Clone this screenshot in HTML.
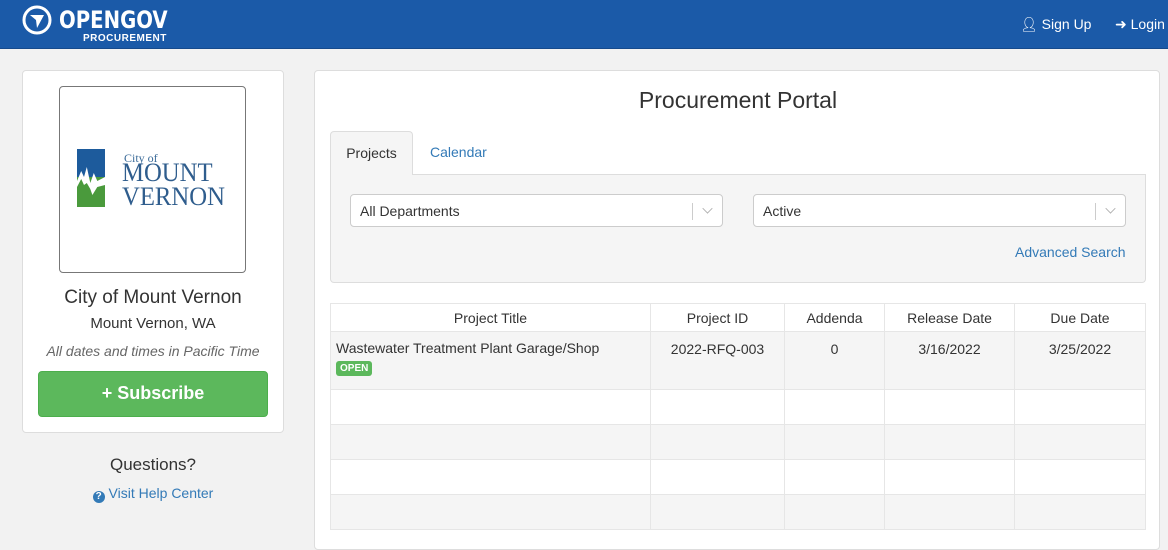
<!DOCTYPE html>
<html><head><meta charset="utf-8"><style>
*{box-sizing:border-box;margin:0;padding:0}
body{width:1168px;height:535px;overflow:hidden;background:#f2f2f2;font-family:"Liberation Sans",Arial,sans-serif;font-size:14px;color:#333;position:relative}
.hdr{position:absolute;left:0;top:0;width:1168px;height:49px;background:#1b5aa8;border-bottom:1px solid #164a8c}
.abs{position:absolute}
.panel{position:absolute;background:#fff;border:1px solid #ddd;border-radius:4px}
.sel{position:absolute;height:33px;background:#fff;border:1px solid #ccc;border-radius:4px;padding:8px 9px;font-size:14px}
.sel .bar{position:absolute;right:29px;top:8px;width:1px;height:17px;background:#ccc}
.sel .ch{position:absolute;right:10px;top:9px;width:9px;height:9px;border-right:1.5px solid #aaa;border-bottom:1.5px solid #aaa;transform:rotate(45deg) scale(.8)}
table{border-collapse:collapse;position:absolute;left:330px;top:303px;width:816px;font-size:14px}
td,th{border:1px solid #e6e6e6;text-align:center;font-weight:normal}
th{height:28px;background:#fff}
</style></head><body>
<div class="hdr">
<svg class="abs" style="left:22px;top:5px" width="30" height="30" viewBox="0 0 30 30"><circle cx="15" cy="15" r="13" fill="none" stroke="#fff" stroke-width="3"/><path d="M8 10 L22 10 L15 23 L14 15 Z" fill="#fff"/></svg>
<div class="abs" style="left:59px;top:6px;color:#fff;font-weight:bold;font-size:24px;letter-spacing:0px;transform:scaleX(.82);transform-origin:left;font-family:'DejaVu Sans','Liberation Sans',sans-serif">OPENGOV</div>
<div class="abs" style="left:83px;top:33px;color:#fff;font-weight:bold;font-size:10px;letter-spacing:.5px">PROCUREMENT</div>
<div class="abs" style="left:1020px;top:16px;color:#fff;font-size:14px">&#128100;︎ Sign Up</div>
<div class="abs" style="left:1115px;top:16px;color:#fff;font-size:14px">&#10140; Login</div>
</div>

<div class="panel" style="left:22px;top:70px;width:262px;height:363px">
<div class="abs" style="left:36px;top:15px;width:187px;height:187px;border:1px solid #777;border-radius:4px;background:#fff">
<svg class="abs" style="left:17px;top:62px" width="28" height="58" viewBox="0 0 40 58" preserveAspectRatio="none"><rect width="40" height="30" fill="#1d5b9c"/><rect y="28" width="40" height="30" fill="#4a9a3c"/><path d="M0 32 L6 22 L10 28 L14 18 L19 34 L24 24 L29 32 L40 28 L40 36 L29 38 L22 46 L19 40 L14 34 L10 36 L6 30 L0 38Z" fill="#fff"/></svg>
<div class="abs" style="left:64px;top:64px;color:#3a6a98;font-family:'Liberation Serif',serif;font-size:12px">City of</div>
<div class="abs" style="left:62px;top:74px;color:#2f5d8d;font-family:'Liberation Serif',serif;font-size:26px;line-height:24px;transform:scaleX(.95);transform-origin:left">MOUNT<br>VERNON</div>
</div>
<div class="abs" style="left:0;width:260px;top:216px;text-align:center;font-size:19px">City of Mount Vernon</div>
<div class="abs" style="left:0;width:260px;top:244px;text-align:center;font-size:15px">Mount Vernon, WA</div>
<div class="abs" style="left:0;width:260px;top:272px;text-align:center;font-size:14px;font-style:italic;color:#666">All dates and times in Pacific Time</div>
<div class="abs" style="left:15px;top:300px;width:230px;height:46px;background:#5cb85c;border:1px solid #4cae4c;border-radius:4px;color:#fff;font-size:18px;text-align:center;line-height:43px;font-weight:bold">+ Subscribe</div>
</div>
<div class="abs" style="left:22px;width:262px;top:455px;text-align:center;font-size:17px">Questions?</div>
<div class="abs" style="left:22px;width:262px;top:485px;text-align:center;font-size:14px;color:#337ab7"><span style="display:inline-block;width:12px;height:12px;border-radius:50%;background:#337ab7;color:#fff;font-size:10px;line-height:12px;font-weight:bold;vertical-align:-1px">?</span> Visit Help Center</div>

<div class="panel" style="left:314px;top:70px;width:846px;height:480px">
<div class="abs" style="left:0;width:846px;top:16px;text-align:center;font-size:23px">Procurement Portal</div>
</div>
<div class="abs" style="left:330px;top:174px;width:816px;height:1px;background:#ddd"></div>
<div class="abs" style="left:330px;top:131px;width:83px;height:45px;background:#f5f5f5;border:1px solid #ddd;border-bottom:none;border-radius:4px 4px 0 0;text-align:center;line-height:42px">Projects</div>
<div class="abs" style="left:430px;top:144px;color:#337ab7">Calendar</div>
<div class="abs" style="left:330px;top:175px;width:816px;height:108px;background:#f5f5f5;border:1px solid #ddd;border-top:none;border-radius:0 0 4px 4px"></div>
<div class="sel" style="left:350px;top:194px;width:373px">All Departments<div class="bar"></div><div class="ch"></div></div>
<div class="sel" style="left:753px;top:194px;width:373px">Active<div class="bar"></div><div class="ch"></div></div>
<div class="abs" style="left:1015px;top:244px;color:#337ab7">Advanced Search</div>
<table>
<tr><th style="width:320px">Project Title</th><th style="width:134px">Project ID</th><th style="width:100px">Addenda</th><th style="width:130px">Release Date</th><th>Due Date</th></tr>
<tr style="background:#f5f5f5;height:58px;vertical-align:top"><td style="text-align:left;padding:8px 5px">Wastewater Treatment Plant Garage/Shop<br><span style="display:inline-block;margin-top:5px;background:#5cb85c;color:#fff;font-size:10px;font-weight:bold;padding:2px 4px;border-radius:3px">OPEN</span></td><td style="padding-top:9px">2022-RFQ-003</td><td style="padding-top:9px">0</td><td style="padding-top:9px">3/16/2022</td><td style="padding-top:9px">3/25/2022</td></tr>
<tr style="height:35px;background:#fff"><td></td><td></td><td></td><td></td><td></td></tr>
<tr style="height:35px;background:#f5f5f5"><td></td><td></td><td></td><td></td><td></td></tr>
<tr style="height:35px;background:#fff"><td></td><td></td><td></td><td></td><td></td></tr>
<tr style="height:35px;background:#f5f5f5"><td></td><td></td><td></td><td></td><td></td></tr>
</table>
</body></html>
